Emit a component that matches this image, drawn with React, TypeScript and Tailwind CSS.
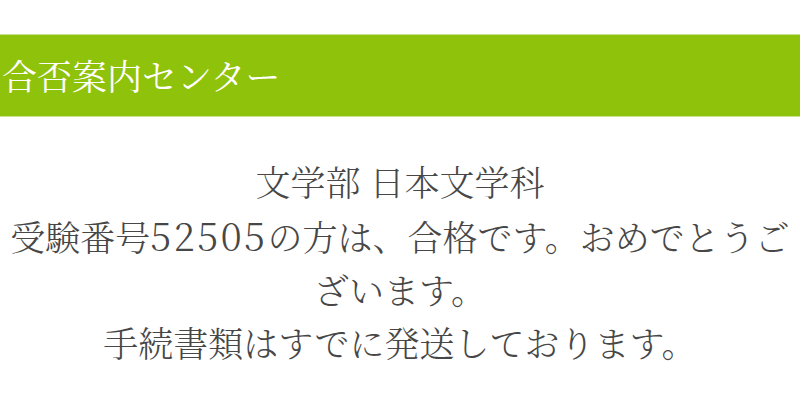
import React from "react";

export default function App() {
  const serif = '"Noto Serif CJK JP", "Noto Sans CJK JP", serif';
  return (
    <div className="w-[800px] h-[418px] bg-white overflow-hidden flex flex-col">
      <div className="h-[34px] shrink-0" />
      <div className="h-[83px] shrink-0 flex items-center bg-[#8fc20b] border-y border-[#c9e28f] pl-[2px]">
        <h1
          className="text-white text-[35px] leading-none"
          style={{ fontFamily: serif }}
        >
          合否案内センター
        </h1>
      </div>
      <div
        className="px-1 pt-[38px] text-center text-[35px] leading-[53px] text-[#474747] font-light"
        style={{ fontFamily: serif }}
      >
        <p>文学部 日本文学科</p>
        <p>
          受験番号
          <span className="text-[38px] tracking-[2.5px]">52505</span>
          の方は、合格です。おめでとうございます。
        </p>
        <p>手続書類はすでに発送しております。</p>
      </div>
    </div>
  );
}
